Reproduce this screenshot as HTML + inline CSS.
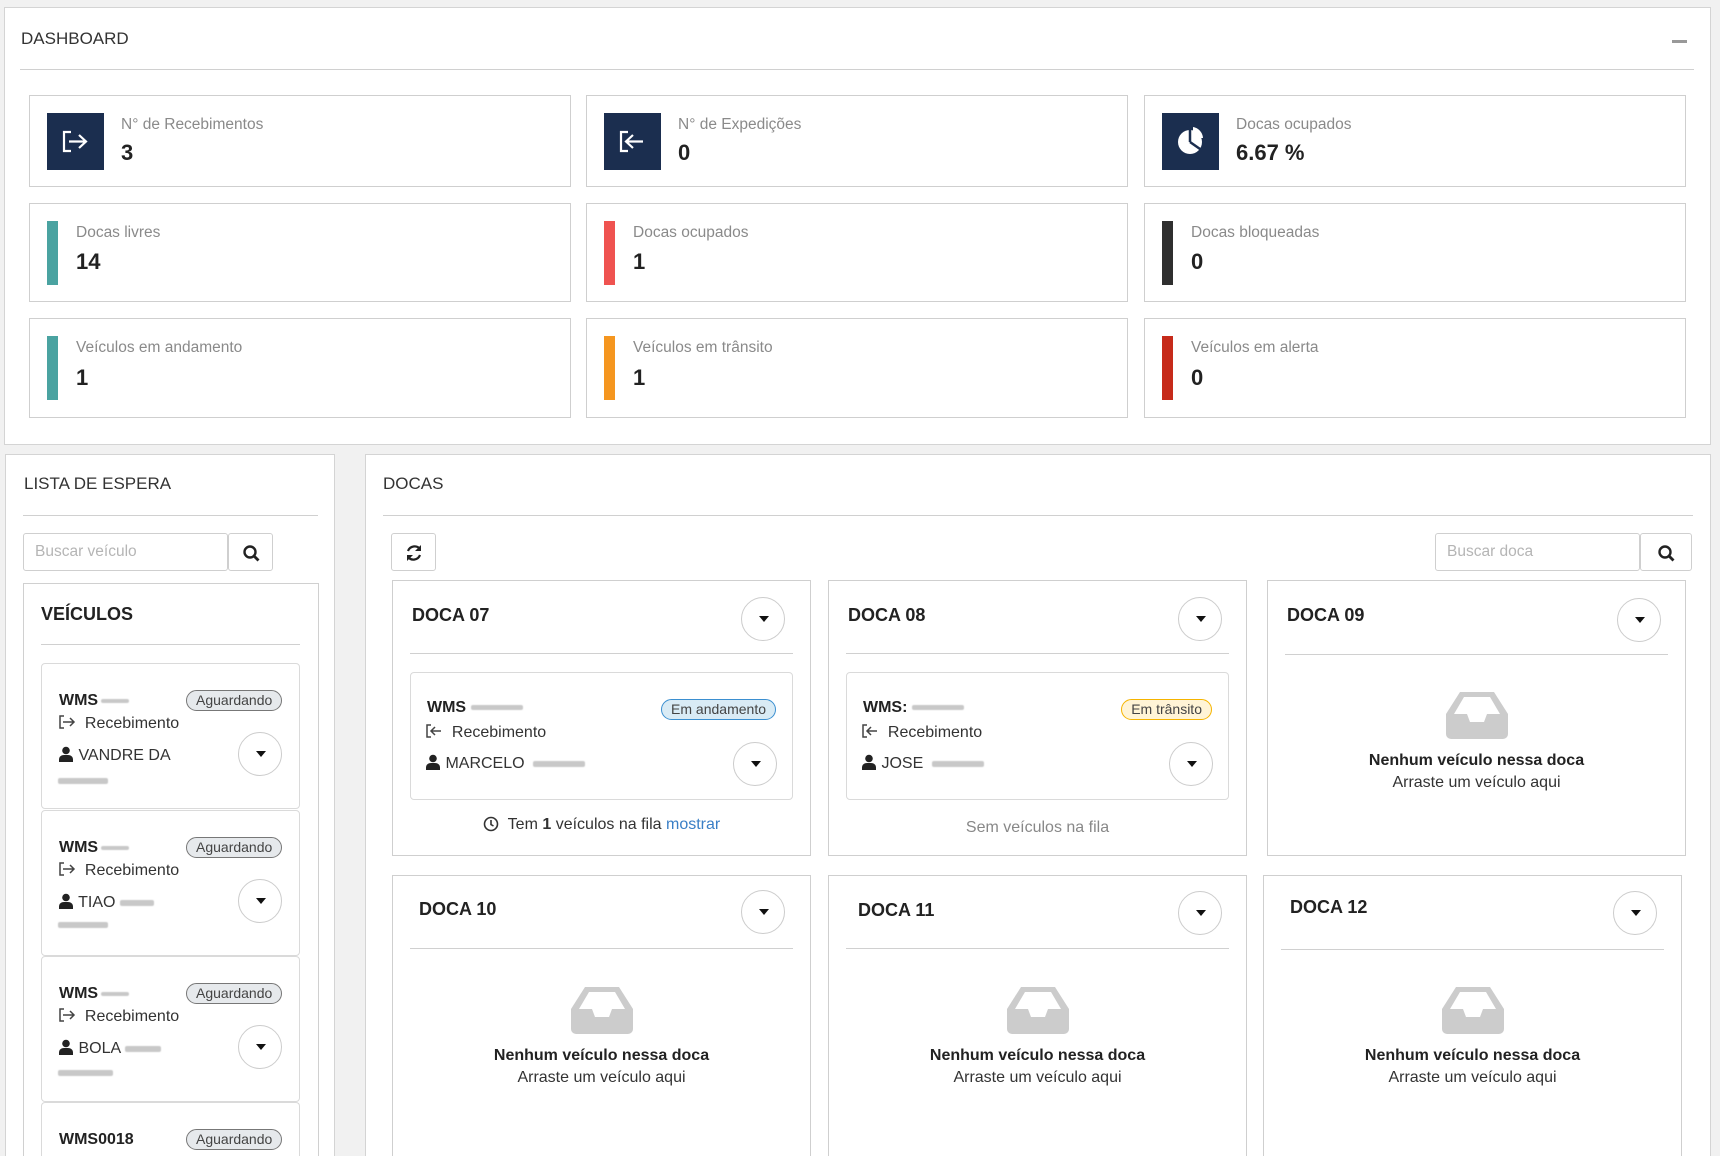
<!DOCTYPE html>
<html style="width:1720px;height:1156px;overflow:hidden"><head><meta charset="utf-8">
<style>
*{box-sizing:border-box;margin:0;padding:0}
body{width:1720px;height:1156px;background:#f1f1f1;font-family:"Liberation Sans",sans-serif;color:#333;position:relative;overflow:hidden}
.abs{position:absolute}
.panel{position:absolute;background:#fff;border:1px solid #d4d4d4}
.ttl{position:absolute;font-size:17px;color:#333;line-height:20px}
.hr{position:absolute;height:1px;background:#d0d0d0}
.sc{position:absolute;border:1px solid #cfcfcf;background:#fff}
.sc .lb{position:absolute;font-size:15.5px;color:#8a8a8a;line-height:20px}
.sc .vl{position:absolute;font-size:22px;font-weight:bold;color:#222;line-height:26px}
.ib{position:absolute;left:17px;top:17px;width:57px;height:57px;background:#1b2e4f}
.bar{position:absolute;left:17px;top:17px;width:11px;height:64px}
.inp{position:absolute;border:1px solid #cfcfcf;border-radius:3px;background:#fff;font-size:15.5px;color:#b5b5b5;padding-left:11px;line-height:36px}
.btn{position:absolute;border:1px solid #cfcfcf;border-radius:3px;background:#fff}
.vc{position:absolute;left:41px;width:259px;height:146px;border:1px solid #dadada;border-radius:4px;background:#fff}
.wms{position:absolute;font-weight:bold;font-size:16px;color:#222;line-height:20px}
.badge{position:absolute;font-size:14px;line-height:19px;border-radius:11px;padding:0 9px;color:#444}
.ag{background:#e6e9ec;border:1px solid #777}
.circ{position:absolute;width:44px;height:44px;border:1px solid #ccc;border-radius:50%;background:#fff}
.circ:after{content:"";position:absolute;left:17px;top:18px;border-left:5px solid transparent;border-right:5px solid transparent;border-top:6px solid #111}
.row{position:absolute;font-size:16px;color:#333;line-height:20px;white-space:nowrap}
.row svg{vertical-align:-2px}
.blur{display:inline-block;height:6px;background:#c8c8c8;border-radius:2px;vertical-align:middle;filter:blur(0.6px)}
.dc{position:absolute;border:1px solid #cfcfcf;background:#fff;width:419px;height:276px}
.dc .dt{position:absolute;left:19px;top:24px;font-size:18px;font-weight:bold;color:#222;line-height:20px}
.dc .hr{left:17px;right:17px;top:72px}
.inner{position:absolute;left:17px;right:17px;top:91px;height:128px;border:1px solid #dadada;border-radius:4px}
.empty{position:absolute;left:0;right:0;top:110px;text-align:center}
.empty .t1{font-weight:bold;font-size:16px;color:#222;line-height:22px;margin-top:6px}
.empty .t2{font-size:16px;color:#333;line-height:22px}
</style></head><body>
<svg width="0" height="0" style="position:absolute">
<defs>
<symbol id="usr" viewBox="0 0 16 16"><circle cx="8" cy="4.5" r="3.8" fill="#222"/><path d="M1 16v-2.5C1 10.5 3.5 9 6 9h4c2.5 0 5 1.5 5 4.5V16z" fill="#222"/></symbol>
<symbol id="in" viewBox="0 0 18 16"><path d="M6 2H2v12h4" fill="none" stroke="#444" stroke-width="1.5"/><path d="M5 8h11M12 4l4 4-4 4" fill="none" stroke="#444" stroke-width="1.5"/></symbol>
<symbol id="out" viewBox="0 0 18 16"><path d="M6 2H2v12h4" fill="none" stroke="#444" stroke-width="1.5"/><path d="M16 8H6M10 4L6 8l4 4" fill="none" stroke="#444" stroke-width="1.5"/></symbol>
<symbol id="box" viewBox="0 0 62 48"><path d="M14 1h34l14 22v20a5 5 0 0 1-5 5H5a5 5 0 0 1-5-5V23z" fill="#ccc"/><path d="M18 6h26l10 17H41l-3 8H24l-3-8H8z" fill="#fff"/></symbol>
</defs></svg>

<div class="panel" style="left:4px;top:7px;width:1707px;height:438px">
  <div class="ttl" style="left:16px;top:21px">DASHBOARD</div>
  <div class="abs" style="left:1667px;top:32px;width:15px;height:3px;background:#999"></div>
  <div class="hr" style="left:15px;top:61px;width:1674px"></div>
</div>

<div class="sc" style="left:29px;top:95px;width:542px;height:92px">
  <div class="ib"><svg width="57" height="57" viewBox="0 0 57 57"><path d="M24 19h-7v19h7" fill="none" stroke="#fff" stroke-width="2.2"/><path d="M22 28.5h16M32 22l7 6.5-7 6.5" fill="none" stroke="#fff" stroke-width="2.2"/></svg></div>
  <div class="lb" style="left:91px;top:19px">N° de Recebimentos</div>
  <div class="vl" style="left:91px;top:44px">3</div>
</div>
<div class="sc" style="left:586px;top:95px;width:542px;height:92px">
  <div class="ib"><svg width="57" height="57" viewBox="0 0 57 57"><path d="M24 19h-7v19h7" fill="none" stroke="#fff" stroke-width="2.2"/><path d="M39 28.5h-16M29 22l-7 6.5 7 6.5" fill="none" stroke="#fff" stroke-width="2.2"/></svg></div>
  <div class="lb" style="left:91px;top:19px">N° de Expedições</div>
  <div class="vl" style="left:91px;top:44px">0</div>
</div>
<div class="sc" style="left:1144px;top:95px;width:542px;height:92px">
  <div class="ib"><svg width="57" height="57" viewBox="0 0 57 57"><circle cx="28" cy="29" r="12" fill="#fff"/><path d="M28 29V17M28 29l10 7" stroke="#1b2e4f" stroke-width="2.5" fill="none"/><path d="M31 14a12 12 0 0 1 10 11h-10z" fill="#fff"/></svg></div>
  <div class="lb" style="left:91px;top:19px">Docas ocupados</div>
  <div class="vl" style="left:91px;top:44px">6.67 %</div>
</div>

<div class="sc" style="left:29px;top:203px;width:542px;height:99px"><div class="bar" style="background:#4aa3a1"></div><div class="lb" style="left:46px;top:19px">Docas livres</div><div class="vl" style="left:46px;top:45px">14</div></div>
<div class="sc" style="left:586px;top:203px;width:542px;height:99px"><div class="bar" style="background:#ef5350"></div><div class="lb" style="left:46px;top:19px">Docas ocupados</div><div class="vl" style="left:46px;top:45px">1</div></div>
<div class="sc" style="left:1144px;top:203px;width:542px;height:99px"><div class="bar" style="background:#2f2f2f"></div><div class="lb" style="left:46px;top:19px">Docas bloqueadas</div><div class="vl" style="left:46px;top:45px">0</div></div>

<div class="sc" style="left:29px;top:318px;width:542px;height:100px"><div class="bar" style="background:#4aa3a1"></div><div class="lb" style="left:46px;top:19px">Veículos em andamento</div><div class="vl" style="left:46px;top:46px">1</div></div>
<div class="sc" style="left:586px;top:318px;width:542px;height:100px"><div class="bar" style="background:#f5961f"></div><div class="lb" style="left:46px;top:19px">Veículos em trânsito</div><div class="vl" style="left:46px;top:46px">1</div></div>
<div class="sc" style="left:1144px;top:318px;width:542px;height:100px"><div class="bar" style="background:#c62a1a"></div><div class="lb" style="left:46px;top:19px">Veículos em alerta</div><div class="vl" style="left:46px;top:46px">0</div></div>

<div class="panel" style="left:5px;top:454px;width:330px;height:702px;border-bottom:none"></div>
<div class="ttl" style="left:24px;top:474px">LISTA DE ESPERA</div>
<div class="hr" style="left:23px;top:515px;width:295px"></div>
<div class="inp" style="left:23px;top:533px;width:205px;height:38px">Buscar veículo</div>
<div class="btn" style="left:228px;top:533px;width:45px;height:38px"><svg width="45" height="38" viewBox="0 0 45 38"><circle cx="21" cy="18" r="5.5" fill="none" stroke="#222" stroke-width="2.4"/><path d="M25 22l4.5 4.5" stroke="#222" stroke-width="2.8"/></svg></div>
<div class="abs" style="left:23px;top:583px;width:296px;height:573px;border:1px solid #d0d0d0;border-bottom:none"></div>
<div class="abs" style="left:41px;top:604px;font-size:18px;font-weight:bold;color:#222">VEÍCULOS</div>
<div class="hr" style="left:41px;top:644px;width:259px"></div>

<div class="vc" style="top:663px">
  <div class="wms" style="left:17px;top:27px">WMS<span class="blur" style="width:28px;height:4px;margin-left:3px"></span></div>
  <div class="badge ag" style="left:144px;top:26px">Aguardando</div>
  <div class="row" style="left:16px;top:50px"><svg width="18" height="16"><use href="#in"/></svg>&nbsp; Recebimento</div>
  <div class="row" style="left:16px;top:82px"><svg width="16" height="16"><use href="#usr"/></svg> VANDRE DA</div>
  <div class="circ" style="left:196px;top:68px"></div>
  <div class="row" style="left:16px;top:107px"><span class="blur" style="width:50px"></span></div>
</div>
<div class="vc" style="top:810px">
  <div class="wms" style="left:17px;top:27px">WMS<span class="blur" style="width:28px;height:4px;margin-left:3px"></span></div>
  <div class="badge ag" style="left:144px;top:26px">Aguardando</div>
  <div class="row" style="left:16px;top:50px"><svg width="18" height="16"><use href="#in"/></svg>&nbsp; Recebimento</div>
  <div class="row" style="left:16px;top:82px"><svg width="16" height="16"><use href="#usr"/></svg> TIAO <span class="blur" style="width:34px"></span></div>
  <div class="circ" style="left:196px;top:68px"></div>
  <div class="row" style="left:16px;top:104px"><span class="blur" style="width:50px"></span></div>
</div>
<div class="vc" style="top:956px">
  <div class="wms" style="left:17px;top:27px">WMS<span class="blur" style="width:28px;height:4px;margin-left:3px"></span></div>
  <div class="badge ag" style="left:144px;top:26px">Aguardando</div>
  <div class="row" style="left:16px;top:50px"><svg width="18" height="16"><use href="#in"/></svg>&nbsp; Recebimento</div>
  <div class="row" style="left:16px;top:82px"><svg width="16" height="16"><use href="#usr"/></svg> BOLA <span class="blur" style="width:36px"></span></div>
  <div class="circ" style="left:196px;top:68px"></div>
  <div class="row" style="left:16px;top:106px"><span class="blur" style="width:55px"></span></div>
</div>
<div class="vc" style="top:1102px;height:54px;border-bottom:none;border-radius:4px 4px 0 0">
  <div class="wms" style="left:17px;top:27px">WMS0018</div>
  <div class="badge ag" style="left:144px;top:26px">Aguardando</div>
</div>

<div class="panel" style="left:365px;top:454px;width:1346px;height:702px;border-bottom:none"></div>
<div class="ttl" style="left:383px;top:474px">DOCAS</div>
<div class="hr" style="left:383px;top:515px;width:1310px"></div>
<div class="btn" style="left:391px;top:533px;width:45px;height:38px"><svg width="45" height="38" viewBox="0 0 45 38"><path d="M28 15a7 7 0 0 0-12 2M16 23a7 7 0 0 0 12-2" fill="none" stroke="#222" stroke-width="2.2"/><path d="M29 11v6h-6z" fill="#222"/><path d="M15 27v-6h6z" fill="#222"/></svg></div>
<div class="inp" style="left:1435px;top:533px;width:205px;height:38px">Buscar doca</div>
<div class="btn" style="left:1640px;top:533px;width:52px;height:38px"><svg width="52" height="38" viewBox="0 0 52 38"><circle cx="24" cy="18" r="5.5" fill="none" stroke="#222" stroke-width="2.4"/><path d="M28 22l4.5 4.5" stroke="#222" stroke-width="2.8"/></svg></div>

<div class="dc" style="left:392px;top:580px">
  <div class="dt">DOCA 07</div><div class="circ" style="left:348px;top:16px"></div><div class="hr"></div>
  <div class="inner">
    <div class="wms" style="left:16px;top:25px">WMS <span class="blur" style="width:52px;height:5px"></span></div>
    <div class="badge" style="right:16px;top:26px;background:#d9ebf5;border:1px solid #3b8fd0">Em andamento</div>
    <div class="row" style="left:14px;top:50px"><svg width="18" height="16"><use href="#out"/></svg>&nbsp; Recebimento</div>
    <div class="row" style="left:14px;top:81px"><svg width="16" height="16"><use href="#usr"/></svg> MARCELO&nbsp; <span class="blur" style="width:52px"></span></div>
    <div class="circ" style="left:322px;top:69px"></div>
  </div>
  <div class="row" style="left:0;right:0;text-align:center;top:234px"><svg width="16" height="16" viewBox="0 0 16 16" style="vertical-align:-3px"><circle cx="8" cy="8" r="6.5" fill="none" stroke="#333" stroke-width="1.6"/><path d="M8 4v4.5l2.5 1.5" fill="none" stroke="#333" stroke-width="1.6"/></svg> &nbsp;Tem <b>1</b> veículos na fila <span style="color:#3a7fc6">mostrar</span></div>
</div>
<div class="dc" style="left:828px;top:580px">
  <div class="dt">DOCA 08</div><div class="circ" style="left:349px;top:16px"></div><div class="hr"></div>
  <div class="inner">
    <div class="wms" style="left:16px;top:25px">WMS: <span class="blur" style="width:52px;height:5px"></span></div>
    <div class="badge" style="right:16px;top:26px;background:#fff4d6;border:1px solid #f5b400">Em trânsito</div>
    <div class="row" style="left:14px;top:50px"><svg width="18" height="16"><use href="#out"/></svg>&nbsp; Recebimento</div>
    <div class="row" style="left:14px;top:81px"><svg width="16" height="16"><use href="#usr"/></svg> JOSE&nbsp; <span class="blur" style="width:52px"></span></div>
    <div class="circ" style="left:322px;top:69px"></div>
  </div>
  <div class="row" style="left:0;right:0;text-align:center;top:237px;color:#888">Sem veículos na fila</div>
</div>
<div class="dc" style="left:1267px;top:580px">
  <div class="dt">DOCA 09</div><div class="circ" style="left:349px;top:17px"></div><div class="hr" style="top:73px"></div>
  <div class="empty"><svg width="62" height="48"><use href="#box"/></svg><div class="t1">Nenhum veículo nessa doca</div><div class="t2">Arraste um veículo aqui</div></div>
</div>

<div class="dc" style="left:392px;top:875px;height:281px;border-bottom:none">
  <div class="dt" style="left:26px;top:23px">DOCA 10</div><div class="circ" style="left:348px;top:14px"></div><div class="hr"></div>
  <div class="empty"><svg width="62" height="48"><use href="#box"/></svg><div class="t1">Nenhum veículo nessa doca</div><div class="t2">Arraste um veículo aqui</div></div>
</div>
<div class="dc" style="left:828px;top:875px;height:281px;border-bottom:none">
  <div class="dt" style="left:29px;top:24px">DOCA 11</div><div class="circ" style="left:349px;top:15px"></div><div class="hr"></div>
  <div class="empty"><svg width="62" height="48"><use href="#box"/></svg><div class="t1">Nenhum veículo nessa doca</div><div class="t2">Arraste um veículo aqui</div></div>
</div>
<div class="dc" style="left:1263px;top:875px;height:281px;border-bottom:none">
  <div class="dt" style="left:26px;top:21px">DOCA 12</div><div class="circ" style="left:349px;top:15px"></div><div class="hr" style="top:73px"></div>
  <div class="empty"><svg width="62" height="48"><use href="#box"/></svg><div class="t1">Nenhum veículo nessa doca</div><div class="t2">Arraste um veículo aqui</div></div>
</div>

</body></html>
